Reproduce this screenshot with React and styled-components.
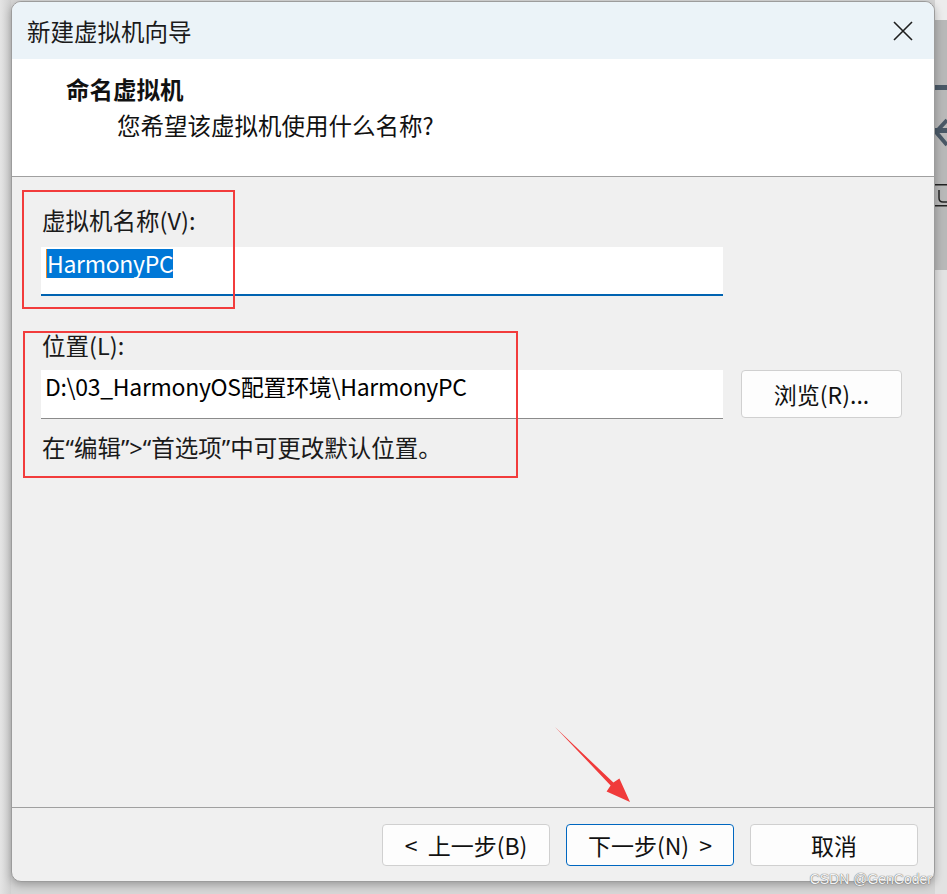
import styled, { createGlobalStyle } from "styled-components";

const GlobalStyle = createGlobalStyle`
  html, body {
    margin: 0;
    padding: 0;
  }
  body {
    background: #d6d6d6;
    font-family: "Noto Sans CJK SC", "Noto Sans", sans-serif;
    color: #1a1a1a;
  }
`;

const Screen = styled.div`
  position: relative;
  display: flex;
  height: 894px;
  overflow: hidden;
`;

const Gutter = styled.div`
  width: 11px;
  flex-shrink: 0;
  background: linear-gradient(to right, #e4e4e4, #d0d0d0);
`;

const BackStrip = styled.div`
  flex: 1;
  display: flex;
  flex-direction: column;
`;

const StripPart = styled.div`
  height: ${(p) => (p.h ? `${p.h}px` : "auto")};
  flex: ${(p) => (p.h ? "none" : 1)};
  background: ${(p) => p.bg};
  overflow: hidden;
`;

const Window = styled.div`
  position: relative;
  z-index: 1;
  flex-shrink: 0;
  width: 924px;
  height: 881px;
  margin-top: 1px;
  box-sizing: border-box;
  border: 1px solid #9c9c9c;
  border-radius: 10px;
  overflow: hidden;
  display: flex;
  flex-direction: column;
  background: #f0f0f0;
  box-shadow: 0 3px 9px rgba(0, 0, 0, 0.28);
`;

const TitleBar = styled.div`
  height: 57px;
  flex-shrink: 0;
  display: flex;
  align-items: center;
  justify-content: space-between;
  padding: 0 21px 0 15px;
  background: #ebf3f8;
  font-size: 23.5px;
  color: #1a1a1a;
`;

const Header = styled.div`
  height: 118px;
  flex-shrink: 0;
  box-sizing: border-box;
  background: #ffffff;
  border-bottom: 1px solid #a0a0a0;
  padding-top: 15px;
`;

const HeaderTitle = styled.div`
  padding-left: 54px;
  font-size: 23.5px;
  font-weight: 700;
  line-height: 30px;
  color: #111;
`;

const HeaderSub = styled.div`
  padding-left: 105px;
  margin-top: 6px;
  font-size: 23.5px;
  line-height: 30px;
  color: #111;
`;

const Body = styled.div`
  position: relative;
  flex: 1;
  display: flex;
  flex-direction: column;
  padding: 27px 32px 0 29px;
`;

const Label = styled.div`
  margin-left: 1px;
  margin-top: ${(p) => p.top || 0}px;
  font-size: 23.5px;
  line-height: 32px;
  color: #1a1a1a;
`;

const Row = styled.div`
  display: flex;
  align-items: flex-start;
  gap: 18px;
  margin-top: ${(p) => p.top || 0}px;
`;

const Field = styled.div`
  width: 682px;
  height: 49px;
  box-sizing: border-box;
  background: #ffffff;
  border-bottom: ${(p) => (p.focused ? "2px solid #0063b1" : "1px solid #8b8b8b")};
  padding: 2px 0 0 ${(p) => (p.focused ? 6 : 4)}px;
  font-size: 23px;
  letter-spacing: -0.3px;
  line-height: 29px;
  color: #000;
  white-space: nowrap;
`;

const Selected = styled.span`
  display: inline-block;
  position: relative;
  background: #0078d7;
  color: #ffffff;
  height: 29px;
  &::before {
    content: "";
    position: absolute;
    left: -1px;
    top: 0;
    width: 1px;
    height: 29px;
    background: #f08a24;
  }
`;

const Button = styled.button`
  width: ${(p) => p.w || 168}px;
  height: ${(p) => p.h || 42}px;
  flex-shrink: 0;
  box-sizing: border-box;
  background: #fdfdfd;
  border: 1px solid ${(p) => (p.primary ? "#0067c0" : "#d0d0d0")};
  border-radius: 4px;
  font-family: inherit;
  font-size: 23px;
  color: #111;
  padding: 0;
  display: flex;
  align-items: center;
  justify-content: center;
  white-space: pre;
`;

const Hint = styled.div`
  margin-top: 12px;
  margin-left: 1px;
  font-size: 23.5px;
  line-height: 32px;
  color: #1a1a1a;
`;

const Quote = styled.span`
  font-family: "Noto Sans", sans-serif;
`;

const Footer = styled.div`
  flex-shrink: 0;
  display: flex;
  justify-content: flex-end;
  gap: 16px;
  border-top: 1px solid #a0a0a0;
  padding: 16px 16px 15px;
`;

const Mark = styled.div`
  position: absolute;
  border: 2px solid #f23c3c;
  left: ${(p) => p.x}px;
  top: ${(p) => p.y}px;
  width: ${(p) => p.w}px;
  height: ${(p) => p.h}px;
  box-sizing: border-box;
  pointer-events: none;
`;

const Arrow = styled.svg`
  position: absolute;
  left: 540px;
  top: 546px;
`;

const Watermark = styled.div`
  position: absolute;
  right: 15px;
  bottom: 7px;
  z-index: 2;
  font-family: "Liberation Sans", Arial, sans-serif;
  font-size: 14px;
  color: #f4f4f4;
  text-shadow: 0 0 1px #6a6a6a, 0 0 1px #6a6a6a;
`;

const CloseIcon = () => (
  <svg width="20" height="20" viewBox="0 0 20 20">
    <path d="M1 1 L19 19 M19 1 L1 19" stroke="#1e1e1e" strokeWidth="1.6" fill="none" />
  </svg>
);

const BackdropMarks = () => (
  <svg width="12" height="250" viewBox="0 0 12 250">
    <rect x="0" y="65" width="12" height="5" fill="#4a5866" />
    <path d="M12 100 L1 112 L12 125" stroke="#4a5866" strokeWidth="4" fill="none" />
    <rect x="0" y="108" width="12" height="5" fill="#4a5866" />
    <rect x="0" y="164" width="12" height="1.5" fill="#222" />
    <path d="M4 170 L4 178 Q4 182 8 182 L12 182" stroke="#222" strokeWidth="1.5" fill="none" />
    <rect x="0" y="185" width="12" height="1.5" fill="#222" />
  </svg>
);

export default function App() {
  return (
    <>
      <GlobalStyle />
      <Screen>
        <Gutter />
        <Window>
          <TitleBar>
            <span>新建虚拟机向导</span>
            <CloseIcon />
          </TitleBar>
          <Header>
            <HeaderTitle>命名虚拟机</HeaderTitle>
            <HeaderSub>您希望该虚拟机使用什么名称?</HeaderSub>
          </Header>
          <Body>
            <Label>虚拟机名称(V):</Label>
            <Row top={11}>
              <Field focused>
                <Selected>HarmonyPC</Selected>
              </Field>
            </Row>
            <Label top={33}>位置(L):</Label>
            <Row top={9}>
              <Field>D:\03_HarmonyOS配置环境\HarmonyPC</Field>
              <Button w={161} h={48}>浏览(R)...</Button>
            </Row>
            <Hint>
              在<Quote>“</Quote>编辑<Quote>”&gt;“</Quote>首选项<Quote>”</Quote>中可更改默认位置。
            </Hint>

            <Mark x={10} y={13} w={213} h={119} />
            <Mark x={11} y={154} w={495} h={147} />
            <Arrow width="90" height="90" viewBox="0 0 90 90">
              <polygon
                points="3,4 58.6,62.4 54.6,68.4 78,79 67.4,55.6 61.4,59.6"
                fill="#f03a3a"
              />
            </Arrow>
          </Body>
          <Footer>
            <Button>{"<  上一步(B)"}</Button>
            <Button primary>{"下一步(N)  >"}</Button>
            <Button>取消</Button>
          </Footer>
        </Window>
        <BackStrip>
          <StripPart h={20} bg="#ececec" />
          <StripPart h={250} bg="#b8b8b8">
            <BackdropMarks />
          </StripPart>
          <StripPart bg="#e2e2e2" />
        </BackStrip>
        <Watermark>CSDN @GenCoder</Watermark>
      </Screen>
    </>
  );
}
